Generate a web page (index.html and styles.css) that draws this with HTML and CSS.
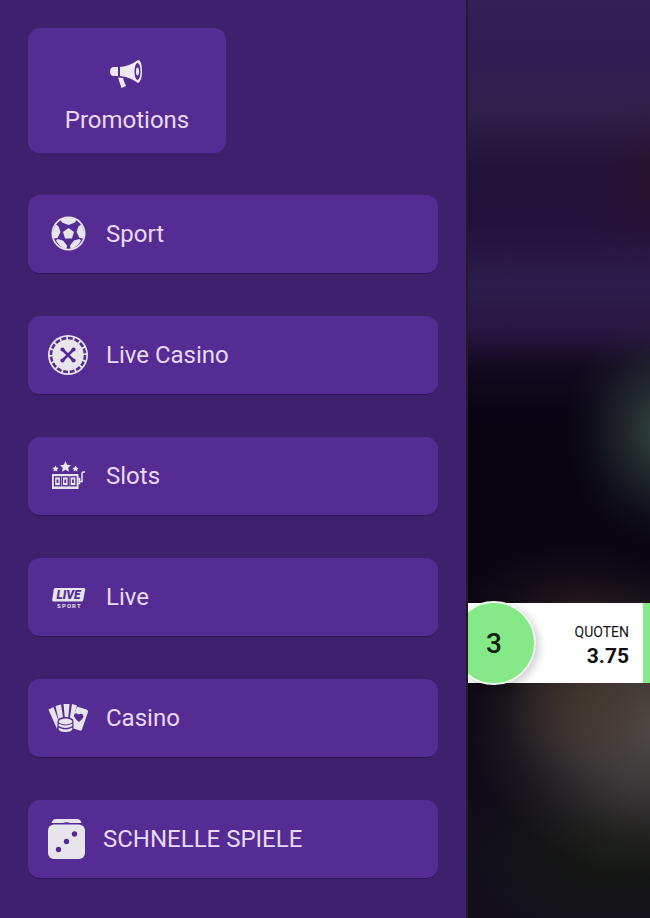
FILE: index.html
```html
<!DOCTYPE html>
<html lang="de">
<head>
  <meta charset="UTF-8" />
  <title>Menu</title>
  <meta name="viewport" content="width=device-width, initial-scale=1.0">
  <link rel="stylesheet" href="styles.css">
</head>
<body>

  <nav class="sidebar">
    <a class="promo" href="#promotions">
      <svg class="promo-icon" viewBox="0 0 34 30" fill="currentColor">
        <path d="M8 8H4Q0 8 0 12.500Q0 17 4 17H8Z"/>
        <path d="M10 8Q20 7 28 1Q32 1 32 12.500Q32 22 28 24Q20 18 10 17Z"/>
        <path d="M8 18.500L13 19Q14 23 16 27L11.500 29Z"/>
        <ellipse class="cut" cx="27.500" cy="12.500" rx="3" ry="8.500"/>
        <ellipse cx="27.500" cy="12.500" rx="1.500" ry="4"/>
      </svg>
      Promotions
    </a>

    <a class="item" href="#sport">
      <svg class="icon" viewBox="0 0 40 40" fill="currentColor">
        <circle cx="20.500" cy="19.500" r="17"/>
        <circle class="cut" cx="20.500" cy="19.500" r="15.300"/>
        <g transform="translate(0.5 -0.5)">
          <path d="M20 14.500L25.500 18.500L23.500 25H16.500L14.500 18.500Z"/>
          <path d="M12 6Q20 2.500 28 6L26.500 9L20 11.500L13.500 9Z"/>
          <path d="M32.500 11Q37 18 35 25L31 24.500L28 18.500L30 13Z"/>
          <path d="M7.500 11Q3 18 5 25L9 24.500L12 18.500L10 13Z"/>
          <path d="M32.500 27Q29 34 22 35.500L21.500 32L25.500 27L31 25.500Z"/>
          <path d="M7.500 27Q11 34 18 35.500L18.500 32L14.500 27L9 25.500Z"/>
        </g>
      </svg>
      <span class="label">Sport</span>
    </a>

    <a class="item" href="#live-casino">
      <svg class="icon" viewBox="0 0 40 40" fill="currentColor">
        <circle cx="20" cy="20" r="20"/>
        <circle class="cut-line" cx="20" cy="20" r="17" stroke-width="2.600" pathLength="96" stroke-dasharray="4.400 1.600"/>
        <path class="cut-line" d="M15 15L25 25M25 15L15 25" stroke-width="2.600"/>
        <g class="cut">
          <circle cx="14.500" cy="14.500" r="2.100"/>
          <circle cx="25.500" cy="14.500" r="2.100"/>
          <circle cx="14.500" cy="25.500" r="2.100"/>
          <circle cx="25.500" cy="25.500" r="2.100"/>
        </g>
      </svg>
      <span class="label">Live Casino</span>
    </a>

    <a class="item" href="#slots">
      <svg class="icon" viewBox="0 0 40 40" fill="currentColor">
        <path d="M17.500 5L19.200 8.700L23 9.200L20.200 11.800L21 15.700L17.500 13.700L14 15.700L14.800 11.800L12 9.200L15.800 8.700Z"/>
        <path d="M7.500 9.500L8.500 11.600L10.700 11.900L9.100 13.400L9.500 15.600L7.500 14.500L5.500 15.600L5.900 13.400L4.300 11.900L6.500 11.600Z"/>
        <path d="M27.500 9.500L28.500 11.600L30.700 11.900L29.100 13.400L29.500 15.600L27.500 14.500L25.500 15.600L25.900 13.400L24.300 11.900L26.500 11.600Z"/>
        <rect x="4" y="18" width="26.500" height="15"/>
        <path d="M30 22.500H31.500V27.500H30M31.500 25.500H34V17.500Q34 16 35.500 16H37" fill="none" stroke="currentColor" stroke-width="1.500"/>
        <g class="cut-line" stroke-width="1.300">
          <rect x="6.500" y="20.800" width="6" height="9"/>
          <rect x="14.300" y="20.800" width="6" height="9"/>
          <rect x="22" y="20.800" width="6" height="9"/>
          <path d="M9.500 23.500V27M17.300 23.500V27M25 23.500V27" stroke-width="1.800"/>
        </g>
      </svg>
      <span class="label">Slots</span>
    </a>

    <a class="item" href="#live">
      <svg class="icon" viewBox="0 0 40 40" fill="currentColor">
        <path d="M7 11H36Q37.500 11 37.200 12.500L35.200 23Q35 24.500 33.500 24.500H5.500Q4 24.500 4.200 23L5.700 12.500Q6 11 7 11Z"/>
        <text class="logo-live" x="20.500" y="22" text-anchor="middle">LIVE</text>
        <text class="logo-sport" x="9" y="31">S</text>
        <text class="logo-sport" x="14" y="31">P</text>
        <text class="logo-sport" x="19" y="31">O</text>
        <text class="logo-sport" x="24" y="31">R</text>
        <text class="logo-sport" x="29" y="31">T</text>
      </svg>
      <span class="label">Live</span>
    </a>

    <a class="item" href="#casino">
      <svg class="icon" viewBox="0 0 40 40" fill="currentColor">
        <path d="M0.500 11.500L5.500 9L11 24L9 31Z"/>
        <path d="M7.500 8L13 6.500L15.500 22L11 24Z"/>
        <path d="M15.500 6H21.500L20 22H17Z"/>
        <path d="M24 6L29 7.500L24 24L21.500 22Z"/>
        <path d="M30.500 9L38.500 11.500Q40.500 12.500 40 14L34 31.500Q33.500 33 32 32.500L24 30V22L28.500 10Q29 8.500 30.500 9Z"/>
        <path class="cut" d="M31 24Q25.500 19.500 26 17Q27.500 14 30.500 16.500Q34.500 14.500 35.500 18Q35.500 20.500 31 24Z"/>
        <path class="cut" d="M9.500 23.500Q9.500 19 17.500 19Q25.500 19 25.500 23.500V32Q25 35 17.500 35Q10 35 9.500 32Z"/>
        <ellipse cx="17.500" cy="23.500" rx="6.800" ry="3"/>
        <path d="M10.700 25.500Q17.500 29.500 24.300 25.500V28Q17.500 32 10.700 28Z"/>
        <path d="M10.700 29.500Q17.500 33.500 24.300 29.500V31.500Q23 34 17.500 34Q12 34 10.700 31.500Z"/>
      </svg>
      <span class="label">Casino</span>
    </a>

    <a class="item" href="#schnelle-spiele">
      <svg class="icon icon-dice" viewBox="0 0 37 40" fill="currentColor">
        <rect y="5.500" width="37" height="34.500" rx="6"/>
        <path d="M3.500 4Q4.500 0 8 0H29Q32.500 0 33.500 4H22Q18.500 2.500 15 4Z"/>
        <circle class="cut" cx="26.500" cy="15" r="2.700"/>
        <circle class="cut" cx="18.500" cy="22.500" r="2.700"/>
        <circle class="cut" cx="10.500" cy="30.500" r="2.700"/>
      </svg>
      <span class="label">SCHNELLE SPIELE</span>
    </a>
  </nav>

  <main class="backdrop">
    <div class="betslip">
      <span class="count">3</span>
      <div class="odds">
        <span class="odds-title">QUOTEN</span>
        <strong class="odds-value">3.75</strong>
      </div>
    </div>
  </main>

</body>
</html>
```
FILE: styles.css
```css
* { box-sizing: border-box; }

body {
  margin: 0;
  display: flex;
  min-height: 100vh;
  font-family: Roboto, "Liberation Sans", sans-serif;
  background: #0a0713;
}

.sidebar {
  flex: 0 0 72%;
  display: flex;
  flex-direction: column;
  gap: 42px;
  padding: 28px;
  background: #3f206d;
  border-right: 2px solid #211a29;
}

.promo, .item {
  display: flex;
  align-items: center;
  border-radius: 12px;
  background: #552c94;
  color: #e9daf3;
  font-size: 24px;
  line-height: 28px;
  text-decoration: none;
}
.promo {
  flex-direction: column;
  align-self: flex-start;
  justify-content: flex-end;
  gap: 17px;
  width: 198px;
  height: 125px;
  padding-bottom: 19px;
}
.promo-icon { width: 34px; height: 30px; color: #eee9f2; }

.item {
  gap: 18px;
  height: 79px;
  padding: 0 20px 1px;
  border-bottom: 1px solid #301754;
}
.icon { flex: none; width: 40px; height: 40px; color: #e8e4ec; }
.icon-dice { width: 37px; }

.cut { fill: #552c94; }
.cut-line { fill: none; stroke: #552c94; }
.logo-live { font-size: 12px; font-weight: 900; font-style: italic; fill: #552c94; }
.logo-sport { font-size: 6px; font-weight: 700; }

.backdrop {
  flex: 1;
  position: relative;
  overflow: hidden;
  background:
    radial-gradient(ellipse 100px 120px at 108% 47%, #364841, rgba(54,72,65,0.5) 40%, rgba(54,72,65,0.12) 75%, rgba(54,72,65,0)),
    radial-gradient(ellipse 80px 90px at 105% 20%, rgba(50,19,44,0.6), rgba(50,19,44,0)),
    radial-gradient(ellipse 120px 75px at 60% 67%, rgba(50,35,36,0.7), rgba(50,35,36,0.2) 60%, rgba(50,35,36,0)),
    radial-gradient(ellipse 90px 80px at 65% 76%, rgba(70,54,38,0.6), rgba(70,54,38,0)),
    radial-gradient(ellipse 190px 150px at 105% 79%, #504c4a, rgba(80,76,74,0.7) 40%, rgba(80,76,74,0.15) 80%, rgba(80,76,74,0)),
    radial-gradient(ellipse 150px 90px at 80% 93%, rgba(24,29,18,0.8), rgba(24,29,18,0)),
    linear-gradient(#332058 0, #301d55 5%, #30214a 12%, #211339 18%, #21113a 24%, #2c1e4b 31%, #271640 36%, #120a20 40%, #080412 46%, #090511 62%, #100c15 80%, #120f1b);
}

.betslip {
  position: absolute;
  top: 603px;
  left: 0;
  right: 0;
  display: flex;
  align-items: center;
  justify-content: space-between;
  height: 80px;
  border-right: 7px solid #86e987;
  background: #fff;
}
.count {
  flex: none;
  display: grid;
  place-items: center;
  width: 84px;
  height: 84px;
  margin-left: -16px;
  border: 2px solid #effaef;
  border-radius: 50%;
  background: #86e987;
  box-shadow: 3px 3px 8px rgba(0,0,0,0.2);
  color: #0c210d;
  font-size: 28px;
  font-weight: 500;
}
.odds {
  display: flex;
  flex-direction: column;
  align-items: flex-end;
  padding: 5px 14px 0 0;
  color: #111;
}
.odds-title { font-size: 14px; line-height: 20px; }
.odds-value { font-size: 21px; line-height: 28px; }
```
